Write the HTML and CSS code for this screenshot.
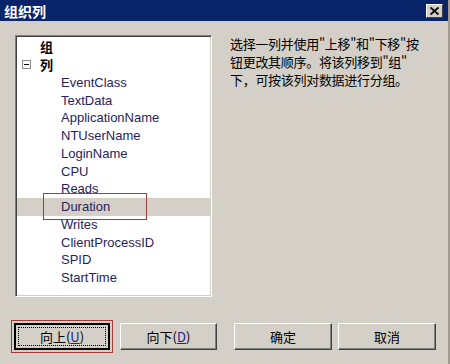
FILE: index.html
```html
<!DOCTYPE html>
<html lang="zh-CN">
<head>
    <meta charset="UTF-8">
    <title>组织列</title>
    <link rel="stylesheet" href="styles.css">
</head>
<body>
    <div class="dialog">
        <!-- Title bar -->
        <div class="titlebar">
            <span class="title">组织列</span>
            <span class="close-btn">
                <svg width="9" height="8" viewBox="0 0 9 8">
                    <path d="M0.5 0.5 L8.5 7.5 M8.5 0.5 L0.5 7.5" stroke="#000" stroke-width="1.8"/>
                </svg>
            </span>
        </div>

        <div class="main">
            <!-- Column tree -->
            <div class="listbox">
                <div class="row group"><span class="expander"></span><span class="label">组</span></div>
                <div class="row group"><span class="expander minus"></span><span class="label">列</span></div>
                <div class="row child">EventClass</div>
                <div class="row child">TextData</div>
                <div class="row child">ApplicationName</div>
                <div class="row child">NTUserName</div>
                <div class="row child">LoginName</div>
                <div class="row child">CPU</div>
                <div class="row child">Reads</div>
                <div class="row child selected">Duration<span class="mark"></span></div>
                <div class="row child">Writes</div>
                <div class="row child">ClientProcessID</div>
                <div class="row child">SPID</div>
                <div class="row child">StartTime</div>
            </div>

            <p class="hint">选择一列并使用"上移"和"下移"按<br>钮更改其顺序。将该列移到"组"<br>下，可按该列对数据进行分组。</p>
        </div>

        <!-- Buttons -->
        <div class="buttons">
            <div class="left-buttons">
                <span class="focus-mark"><button class="btn default"><span class="focus">向上(<u>U</u>)</span></button></span>
                <button class="btn">向下(<u>D</u>)</button>
            </div>
            <div class="right-buttons">
                <button class="btn wide">确定</button>
                <button class="btn wide">取消</button>
            </div>
        </div>
    </div>
</body>
</html>
```

FILE: styles.css
```css
body {
    margin: 0;
    padding: 0;
    background-color: #d4d0c8;
    font-family: "Liberation Sans", "Noto Sans CJK SC", sans-serif;
    font-size: 13px;
}

.dialog {
    width: 450px;
    height: 364px;
    box-sizing: border-box;
    border-right: 2px solid #a09c94;
    display: flex;
    flex-direction: column;
    background-color: #d4d0c8;
}

/* Title bar */
.titlebar {
    height: 21px;
    background-color: #0a246a;
    display: flex;
    align-items: center;
    justify-content: space-between;
    padding: 0 4px 0 4px;
}

.title {
    color: #fff;
    font-weight: bold;
    font-size: 14px;
    font-family: "Noto Sans CJK SC", sans-serif;
}

.close-btn {
    width: 15px;
    height: 12px;
    background-color: #d4d0c8;
    border: 1px solid;
    border-color: #fff #404040 #404040 #fff;
    display: flex;
    align-items: center;
    justify-content: center;
    margin-right: 1px;
}

/* Main area */
.main {
    display: flex;
    padding: 14px 0 0 15px;
    gap: 18px;
}

.listbox {
    width: 197px;
    height: 262px;
    box-sizing: border-box;
    background-color: #fff;
    border: 1px solid;
    border-color: #808080 #fff #fff #808080;
    box-shadow: inset 1px 1px 0 #404040, inset -1px -1px 0 #d4d0c8;
    padding: 2px 1px 0 1px;
    color: #2a1d5c;
}

.row {
    height: 17.75px;
    display: flex;
    align-items: center;
    white-space: nowrap;
    position: relative;
}

.group {
    padding-left: 5px;
    font-family: "Noto Sans CJK SC", sans-serif;
    font-weight: bold;
    color: #000;
}

.expander {
    width: 9px;
    height: 9px;
    box-sizing: border-box;
    margin-right: 9px;
    position: relative;
}

.expander.minus {
    border: 1px solid #8a8a8a;
}

.expander.minus::after {
    content: "";
    position: absolute;
    left: 1px;
    top: 3px;
    width: 5px;
    height: 1px;
    background-color: #000;
}

.child {
    padding-left: 44px;
}

.selected {
    background-color: #d4d0c8;
}

/* red annotation box */
.mark {
    position: absolute;
    left: 26px;
    top: -5px;
    width: 104px;
    height: 27px;
    box-sizing: border-box;
    border: 1px solid #a33a3a;
}

.hint {
    margin: 0;
    padding-top: 0;
    font-family: "Noto Sans CJK SC", sans-serif;
    font-size: 13px;
    line-height: 18px;
    color: #000;
    white-space: nowrap;
    letter-spacing: -0.3px;
}

/* Buttons */
.buttons {
    display: flex;
    justify-content: space-between;
    padding: 26px 12px 0 15px;
}

.left-buttons,
.right-buttons {
    display: flex;
    gap: 6px;
}

.btn {
    width: 97px;
    height: 27px;
    box-sizing: border-box;
    background-color: #d4d0c8;
    border: 1px solid;
    border-color: #fff #404040 #404040 #fff;
    box-shadow: inset -1px -1px 0 #808080;
    font-family: "Noto Sans CJK SC", sans-serif;
    font-size: 13px;
    color: #000;
    padding: 0;
    display: flex;
    align-items: center;
    justify-content: center;
}

.btn.wide {
    width: 98px;
}

.btn u {
    color: #2a1d8c;
}

.btn.default {
    width: 96px;
    border: 2px solid #000;
    box-shadow: none;
    padding: 2px;
}

.btn.default .focus {
    flex: 1;
    align-self: stretch;
    display: flex;
    align-items: center;
    justify-content: center;
    border: 1px dotted #000;
}

.focus-mark {
    display: flex;
    margin: -3px 1px -3px -4px;
    padding: 2px;
    border: 1px solid #a33a3a;
}
```
